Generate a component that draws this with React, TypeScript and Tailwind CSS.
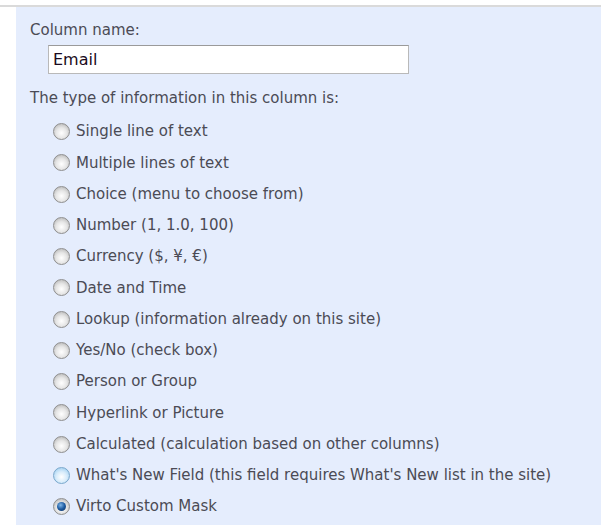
import React from "react";

const options = [
  "Single line of text",
  "Multiple lines of text",
  "Choice (menu to choose from)",
  "Number (1, 1.0, 100)",
  "Currency ($, ¥, €)",
  "Date and Time",
  "Lookup (information already on this site)",
  "Yes/No (check box)",
  "Person or Group",
  "Hyperlink or Picture",
  "Calculated (calculation based on other columns)",
  "What's New Field (this field requires What's New list in the site)",
  "Virto Custom Mask",
];

function Radio({ state }: { state: "normal" | "hover" | "checked" }) {
  if (state === "hover") {
    return (
      <span className="flex h-[17px] w-[17px] shrink-0 items-center justify-center rounded-full border border-[#7aa8cc] bg-[radial-gradient(circle_at_50%_60%,#ffffff_0%,#d8ecfb_45%,#8cc4ec_100%)]" />
    );
  }
  return (
    <span className="flex h-[17px] w-[17px] shrink-0 items-center justify-center rounded-full border border-[#8f8f8f] bg-[radial-gradient(circle_at_50%_60%,#ffffff_0%,#e6e6e6_45%,#a9a9a9_100%)]">
      {state === "checked" && (
        <span className="h-[9px] w-[9px] rounded-full bg-[radial-gradient(circle_at_40%_35%,#7fb6e8_0%,#1d5aa0_50%,#0c2c56_100%)]" />
      )}
    </span>
  );
}

export default function App() {
  return (
    <div className="h-[525px] w-[610px] bg-white font-['DejaVu_Sans',sans-serif]">
      <div className="h-[5px] w-[601px]" />
      <div className="h-[2px] w-[601px] bg-[#dadada]" />
      <div className="ml-[16px] h-[518px] w-[585px] bg-[#e5edfd] pl-[14px] pt-[14px] text-[#4b4b55]">
        <div className="text-[15px] leading-[18px]">Column name:</div>
        <div className="ml-[18px] mt-[6px] flex h-[29px] w-[361px] items-center border border-[#b9b9b9] border-t-[#9a9a9a] bg-white pl-[4px] text-[16px] text-[#1a0a20]">
          Email
        </div>
        <div className="mt-[15px] text-[15px] leading-[18px]">
          The type of information in this column is:
        </div>
        <div className="ml-[23px] mt-[9px] flex flex-col">
          {options.map((o, i) => (
            <div key={o} className="flex h-[31.25px] items-center gap-[6px] text-[15px]">
              <Radio state={i === 12 ? "checked" : i === 11 ? "hover" : "normal"} />
              <span>{o}</span>
            </div>
          ))}
        </div>
      </div>
    </div>
  );
}
